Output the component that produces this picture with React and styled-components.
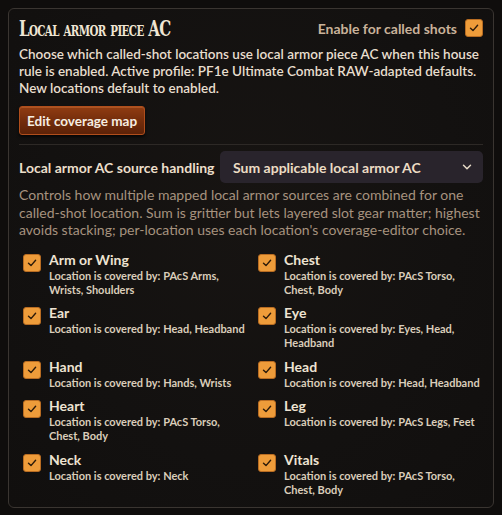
import React from "react";
import styled, { createGlobalStyle } from "styled-components";
import { ChevronDown } from "lucide-react";

const Global = createGlobalStyle`
  html, body { background: #0f0d0c; }
  body { margin: 8px; font-family: "Lato", "Liberation Sans", sans-serif; }
  * { box-sizing: border-box; }
`;

const Panel = styled.section`
  width: 486px;
  min-height: 498px;
  border: 1px solid #3a3531;
  border-radius: 6px;
  background: radial-gradient(ellipse at 50% 40%, #171412 0%, #131110 60%, #110f0e 100%);
  padding: 6px 10px 10px 10px;
  display: flex;
  flex-direction: column;
  & > * { flex-shrink: 0; }
`;

const Header = styled.div`
  display: flex;
  align-items: center;
  justify-content: space-between;
  height: 26px;
`;

const Title = styled.h2`
  margin: 0;
  font-family: "DejaVu Serif Condensed", "DejaVu Serif", serif;
  font-stretch: condensed;
  font-weight: 700;
  font-variant: small-caps;
  font-size: 22px;
  line-height: 26px;
  letter-spacing: -0.8px;
  color: #efe5d3;
  transform: scaleX(0.76);
  transform-origin: left center;
  white-space: nowrap;
`;

const Toggle = styled.label`
  display: flex;
  align-items: center;
  gap: 8px;
  font-weight: 700;
  font-size: 14px;
  color: #c9b29a;
`;

const Box = styled.span`
  flex: none;
  width: 18px;
  height: 18px;
  border-radius: 3px;
  background: #ee9c3a;
  border: 1px solid #b86c22;
  display: inline-flex;
  align-items: center;
  justify-content: center;
  margin-top: ${(p) => p.$top || 0}px;
`;

const Check = () => (
  <svg width="12" height="12" viewBox="0 0 12 12">
    <path d="M2.5 6.2 L5 8.6 L9.6 3.2" fill="none" stroke="#2b1a0a" strokeWidth="1.4" strokeLinecap="round" strokeLinejoin="round" />
  </svg>
);

const Desc = styled.p`
  margin: 5px 0 0;
  font-size: 13.5px;
  line-height: 17px;
  font-weight: 600;
  color: #e8dece;
`;

const Button = styled.button`
  align-self: flex-start;
  margin-top: 9px;
  height: 29px;
  padding: 0 7px;
  border: 1px solid #b04e1c;
  border-radius: 3px;
  background: linear-gradient(180deg, #903c12 0%, #722c0b 55%, #5c2208 100%);
  box-shadow: 0 2px 3px rgba(0, 0, 0, 0.7), inset 0 1px 0 rgba(255, 160, 90, 0.25);
  color: #f6eee2;
  font-family: inherit;
  font-weight: 700;
  font-size: 13.5px;
`;

const Divider = styled.hr`
  width: 100%;
  margin: 9px 0 0;
  border: 0;
  border-top: 1px solid #2d2926;
`;

const FieldRow = styled.div`
  margin-top: 6px;
  display: flex;
  align-items: center;
  gap: 8px;
`;

const FieldLabel = styled.span`
  flex: 1;
  min-width: 0;
  font-weight: 700;
  font-size: 14px;
  color: #ecdfca;
  white-space: nowrap;
`;

const Select = styled.div`
  flex: none;
  width: 263px;
  height: 32px;
  border-radius: 5px;
  background: #29242c;
  display: flex;
  align-items: center;
  justify-content: space-between;
  padding: 0 9px 0 13px;
  font-weight: 700;
  font-size: 14px;
  color: #ecdcc4;
`;

const Hint = styled.p`
  margin: 3px 0 0;
  font-size: 14px;
  line-height: 17.5px;
  color: #a6927f;
`;

const Grid = styled.div`
  margin-top: 12px;
  display: grid;
  grid-template-columns: 1fr 1fr;
  column-gap: 6px;
  row-gap: 7.5px;
`;

const Item = styled.div`
  display: flex;
  gap: 8px;
  padding-left: 4px;
`;

const ItemText = styled.div`
  display: flex;
  flex-direction: column;
  min-width: 0;
`;

const ItemTitle = styled.span`
  font-weight: 700;
  font-size: 14px;
  line-height: 18px;
  color: #eee3d2;
`;

const ItemSub = styled.span`
  font-weight: 700;
  font-size: 11px;
  line-height: 14px;
  color: #dacdba;
`;

const items = [
  ["Arm or Wing", "PAcS Arms, Wrists, Shoulders"],
  ["Chest", "PAcS Torso, Chest, Body"],
  ["Ear", "Head, Headband"],
  ["Eye", "Eyes, Head, Headband"],
  ["Hand", "Hands, Wrists"],
  ["Head", "Head, Headband"],
  ["Heart", "PAcS Torso, Chest, Body"],
  ["Leg", "PAcS Legs, Feet"],
  ["Neck", "Neck"],
  ["Vitals", "PAcS Torso, Chest, Body"],
];

export default function App() {
  return (
    <>
      <Global />
      <Panel>
        <Header>
          <Title>Local armor piece AC</Title>
          <Toggle>
            Enable for called shots
            <Box><Check /></Box>
          </Toggle>
        </Header>
        <Desc>
          Choose which called-shot locations use local armor piece AC when this house rule is enabled. Active profile: PF1e Ultimate Combat RAW-adapted defaults. New locations default to enabled.
        </Desc>
        <Button>Edit coverage map</Button>
        <Divider />
        <FieldRow>
          <FieldLabel>Local armor AC source handling</FieldLabel>
          <Select>
            <span>Sum applicable local armor AC</span>
            <ChevronDown size={14} strokeWidth={2.5} color="#e8dcc8" />
          </Select>
        </FieldRow>
        <Hint>
          Controls how multiple mapped local armor sources are combined for one called-shot location. Sum is grittier but lets layered slot gear matter; highest avoids stacking; per-location uses each location's coverage-editor choice.
        </Hint>
        <Grid>
          {items.map(([name, cov]) => (
            <Item key={name}>
              <Box $top={3}><Check /></Box>
              <ItemText>
                <ItemTitle>{name}</ItemTitle>
                <ItemSub>Location is covered by: {cov}</ItemSub>
              </ItemText>
            </Item>
          ))}
        </Grid>
      </Panel>
    </>
  );
}
